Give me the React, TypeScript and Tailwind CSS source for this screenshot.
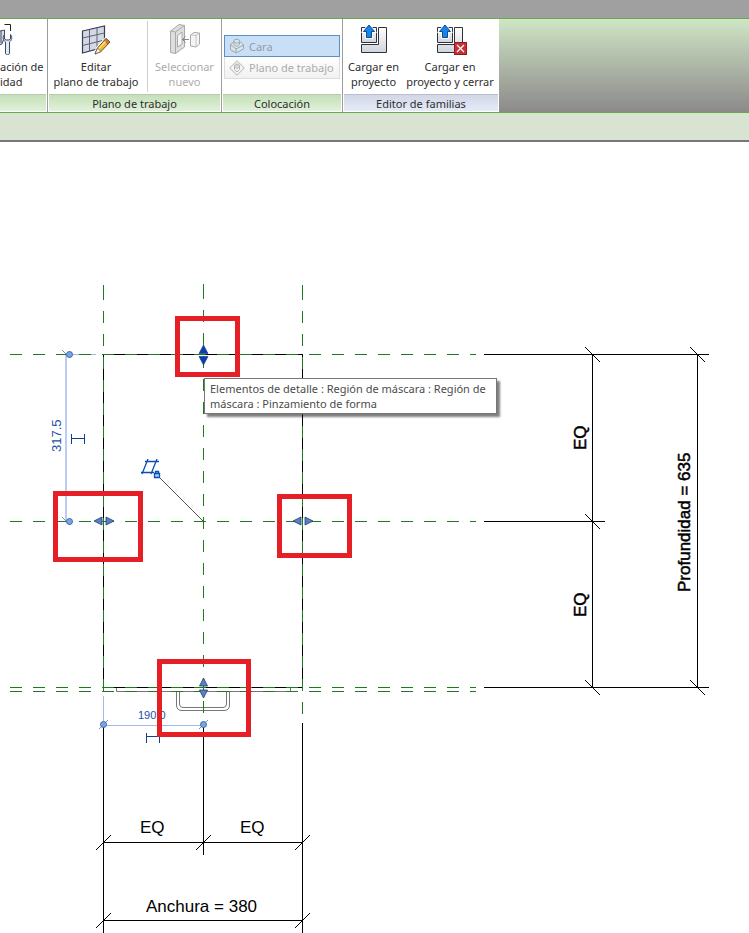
import type { ReactNode } from 'react';

const GREEN = '#1f7a1f';
const NAVY = '#0d3f94';
const DASH = '12 11';

function RibbonPanel({ title, tone = 'green', className, children }: { title: string; tone?: 'green' | 'blue'; className: string; children: ReactNode }) {
  return (
    <section className={`flex shrink-0 flex-col border-r border-[#9c9c9c] bg-white ${className}`}>
      <div className="flex h-[75px]">{children}</div>
      <h2
        className={`mx-px mb-px flex h-[17px] items-center justify-center border-t text-[11px] leading-[15px] text-[#2e2e2e] ${
          tone === 'green' ? 'border-[#b5ccab] bg-linear-to-b from-[#c5dfba] to-[#e0f2d8]' : 'border-[#b9bfd0] bg-linear-to-b from-[#d2d7e6] to-[#e6ebf8]'
        }`}
      >
        {title}
      </h2>
    </section>
  );
}

function LargeButton({ icon, lines, className, disabled }: { icon: ReactNode; lines: [string, string]; className: string; disabled?: boolean }) {
  return (
    <button
      type="button"
      disabled={disabled}
      className={`flex shrink-0 flex-col items-center pt-1 text-[11px] leading-[15px] whitespace-nowrap ${disabled ? 'text-[#acacac]' : 'text-[#2e2e2e]'} ${className}`}
    >
      {icon}
      <span className="mt-1 block">{lines[0]}</span>
      <span className="block">{lines[1]}</span>
    </button>
  );
}

function VisibilityIcon() {
  return (
    <svg width="14" height="32" viewBox="18 0 14 32" fill="none" aria-hidden="true">
      <path d="M22.500 1.500H28.500V8" stroke="#222" />
      <path d="M12 9L18 8L22.500 7V14L20 21L12 24Z" fill="#d5dae4" stroke="#44506a" />
      <path d="M19 8V20" stroke="#44506a" />
      <path d="M22.500 11.500c-2 2-1.500 6 1 7.500v11c0 2.500 4 2.500 4 0v-11c2.500-1.500 3-5.500 1-7.500v4.500l-1.500 1h-3l-1.500-1z" fill="#e4e8ef" stroke="#3c4a66" />
    </svg>
  );
}

function EditPlaneIcon() {
  return (
    <svg width="32" height="32" viewBox="0 0 32 32" fill="none" aria-hidden="true">
      <path d="M2.500 8L24.500 3V24L2.500 30Z" fill="#d4d8e4" />
      <path d="M2.500 8L24.500 3V24L2.500 30Z" stroke="#343d50" strokeWidth="1.200" />
      <path d="M9.500 6.500V28M17 5V26M2.500 15L24.500 10M2.500 22.500L24.500 17" stroke="#5b6478" />
      <path d="M15 31L17.500 25L26 15.500L30 19L21 28.500Z" stroke="#fff" strokeWidth="3" />
      <path d="M15 31L17.500 25L26 15.500L30 19L21 28.500Z" fill="#f2b632" stroke="#6e5322" />
      <path d="M15 31L17.500 25L21 28.500Z" fill="#fff2d8" stroke="#555" strokeWidth=".7" />
      <path d="M24 17.500L26 15.500L30 19L28 21Z" fill="#c97d5c" stroke="#6e5322" strokeWidth=".7" />
      <path d="M19 25.500L25.500 18.500" stroke="#ffe27c" strokeWidth="1.500" />
    </svg>
  );
}

function PickNewIcon() {
  return (
    <svg width="32" height="32" viewBox="0 0 32 32" fill="none" stroke="#a9a9a9" aria-hidden="true">
      <path d="M1.500 8L10 1.500L15.500 2.500V24L6.500 30.500L1.500 29.500Z" fill="#dedede" />
      <path d="M6.500 9L15.500 2.500M6.500 9V30.500M1.500 8L6.500 9" />
      <path d="M8.500 12.500L13 9V21L8.500 24Z" fill="#f8f8f8" />
      <path d="M13 16.500H20M16.500 13.500L13.500 16.500L16.500 19.500" stroke="#888" />
      <path d="M21.500 12L25 9.500L30.500 10V21L27 24L21.500 23Z" fill="#f5f5f5" />
      <path d="M21.500 12L27 12.500L30.500 10M27 12.500V24" stroke="#c4c4c4" />
    </svg>
  );
}

function LoadIcon({ close = false }: { close?: boolean }) {
  return (
    <svg width="32" height="32" viewBox="0 0 32 32" fill="none" className="overflow-visible" aria-hidden="true">
      <defs>
        <linearGradient id="block" x1="0" y1="0" x2="0" y2="1">
          <stop offset="0" stopColor="#fff" />
          <stop offset="1" stopColor="#cfd3dc" />
        </linearGradient>
      </defs>
      <g fill="url(#block)" stroke="#30323a">
        <path d="M3.500 4.500H18.500V19.500H3.500Z" />
        {close ? <path d="M20.500 4.500H28.500V19.500H20.500ZM3.500 21.500H20.500V29.500H3.500Z" /> : <path d="M20.500 4.500H28.500V29.500H3.500V21.500H20.500Z" />}
      </g>
      <path d="M11 2L16.500 8.500H13.500V14.500H8.500V8.500H5.500Z" stroke="#fff" strokeWidth="2.500" />
      <path d="M11 2L16.500 8.500H13.500V14.500H8.500V8.500H5.500Z" fill="#1684ea" stroke="#12488c" />
      {close && (
        <g>
          <rect x="20.500" y="19.500" width="12" height="12" fill="#c83038" stroke="#8f1c22" />
          <path d="M23 22L30 29M30 22L23 29" stroke="#fff" strokeWidth="1.200" />
        </g>
      )}
    </svg>
  );
}

function FaceIcon() {
  return (
    <svg width="16" height="16" viewBox="0 0 16 16" fill="#dce5ed" stroke="#99a6b2" aria-hidden="true">
      <path d="M1.500 6.500L4.500 4L11.500 4L14.500 7V11L7 15L1.500 11.500Z" />
      <path d="M1.500 6.500L7 11L14.500 7M7 11V15" fill="none" />
      <path d="M5 3.500V6.500C6 8.500 9.500 8.500 10.500 6.500V3.500Z" />
      <ellipse cx="7.700" cy="3.200" rx="2.800" ry="2" />
    </svg>
  );
}

function WorkPlaneIcon() {
  return (
    <svg width="16" height="16" viewBox="0 0 16 16" fill="#f4f4f4" stroke="#b4b4b4" aria-hidden="true">
      <path d="M.7 8L8 .7L15.300 8L8 15.300Z" />
      <path d="M5.500 5.500C5.500 3.500 10.500 3.500 10.500 5.500V9.500L8 12L5.500 9.500Z" />
      <ellipse cx="8" cy="6.500" rx="1.300" ry="2" />
    </svg>
  );
}

function Ribbon() {
  return (
    <div role="toolbar" aria-label="Modificar" className="flex h-[95px] overflow-hidden border-y border-[#69a84c] bg-linear-to-b from-[#cfe6c5] to-[#8c8a8a]">
      <section className="flex w-12 shrink-0 flex-col border-r border-[#9c9c9c] bg-white">
        <button type="button" className="flex h-[75px] flex-col items-start pt-1 text-[11px] leading-[15px] whitespace-nowrap text-[#2e2e2e]">
          <VisibilityIcon />
          <span className="mt-1 block">ación de</span>
          <span className="block">idad</span>
        </button>
        <div className="mr-px mb-px h-[17px] border-t border-[#b5ccab] bg-linear-to-b from-[#c5dfba] to-[#e0f2d8]" />
      </section>
      <RibbonPanel title="Plano de trabajo" className="w-[174px]">
        <LargeButton className="w-24" icon={<EditPlaneIcon />} lines={['Editar', 'plano de trabajo']} />
        <div className="my-[2px] ml-[3px] w-px bg-[#cfcfcf]" />
        <LargeButton className="w-[73px]" disabled icon={<PickNewIcon />} lines={['Seleccionar', 'nuevo']} />
      </RibbonPanel>
      <RibbonPanel title="Colocación" className="w-[121px]">
        <div className="mt-4 flex min-w-0 grow flex-col px-[2px]">
          <button type="button" disabled className="flex h-[22px] items-center gap-1 border border-[#5b8fc7] bg-[#c9dff5] px-1 text-[11px] leading-[15px] whitespace-nowrap text-[#919ca6]">
            <FaceIcon />
            Cara
          </button>
          <button type="button" disabled className="flex h-[22px] items-center gap-1 border border-t-0 border-[#dcdcdc] bg-linear-to-b from-white to-[#f1f1f1] px-1 text-[11px] leading-[15px] whitespace-nowrap text-[#acacac]">
            <WorkPlaneIcon />
            Plano de trabajo
          </button>
        </div>
      </RibbonPanel>
      <RibbonPanel title="Editor de familias" tone="blue" className="w-[156px] border-r-0">
        <LargeButton className="w-[61px]" icon={<LoadIcon />} lines={['Cargar en', 'proyecto']} />
        <LargeButton className="w-[92px]" icon={<LoadIcon close />} lines={['Cargar en', 'proyecto y cerrar']} />
      </RibbonPanel>
    </div>
  );
}

function Drawing() {
  return (
    <svg role="img" aria-label="Vista de planta" className="block h-[791px] w-full" fill="none" fontFamily='"Liberation Sans", Arial, sans-serif'>
      <g transform="translate(0 -142)">
        <path d="M66 354V521" stroke="#bccbf3" strokeWidth="2" />
        <g stroke="#a3b9ec" shapeRendering="crispEdges">
          <path d="M103.500 696V725M103 725.500H204M60 354.500H96" />
        </g>

        {/* mask region outline, door panel and handle */}
        <path d="M103.500 354.500H302.500V687.500H103.500Z" stroke="#000" shapeRendering="crispEdges" />
        <g stroke="#777">
          <path d="M116.500 688V691.500H290.500V688" />
          <path d="M176.500 691V705Q176.500 710.500 182 710.500H224Q229.500 710.500 229.500 705V691" />
          <path d="M179.500 691V704Q179.500 707.500 183 707.500H223Q226.500 707.500 226.500 704V691" />
        </g>

        {/* reference planes */}
        <g stroke={GREEN} shapeRendering="crispEdges" strokeDasharray={DASH}>
          <path d="M10 354.500H476M10 521.500H476M10 687.500H476M10 691.500H476" />
          <path d="M103.500 288V692M203.500 287V714M302.500 288V715" />
          <path d="M103.500 285V290M203.500 284V289M302.500 285V290" />
        </g>

        {/* dimension and witness lines */}
        <g stroke="#000" shapeRendering="crispEdges">
          <path d="M484 354.500H709M484 521.500H605M484 687.500H709M592.500 354V688M697.500 354V688" />
          <path d="M103.500 726V933M203.500 726V855M302.500 723V933M103 842.500H303M103 920.500H303" />
          <path d="M585 347L600 362M690 347L705 362M585 514L600 529M585 680L600 695M690 680L705 695" />
          <path d="M96 850L111 835M196 850L211 835M295 850L310 835M96 928L111 913M295 928L310 913" />
        </g>
        <g fill="#000" fontSize="17">
          <text x="140" y="833">EQ</text>
          <text x="240" y="833">EQ</text>
          <text x="146" y="912">Anchura = 380</text>
          <g stroke="#000" strokeWidth=".5">
            <text transform="translate(586 450) rotate(-90)">EQ</text>
            <text transform="translate(586 617) rotate(-90)">EQ</text>
            <text transform="translate(690 592) rotate(-90)">Profundidad = 635</text>
          </g>
        </g>

        {/* temporary dimensions */}
        <g fill="#1c4fa8">
          <text fontSize="13" transform="translate(61 452) rotate(-90)">317.5</text>
          <text fontSize="11" x="138" y="719">190.0</text>
        </g>
        <g stroke={NAVY} shapeRendering="crispEdges">
          <path d="M71.500 434V444M84.500 434V444M72 438.500H85M146.500 733V743M159.500 733V743M147 736.500H160" />
        </g>
        <g stroke="#6f96d6">
          <path d="M62 350L70 358M62 517L70 525M99 729L108 720M199 729L208 720" />
          <g fill="#76a5e8" stroke="#46679c">
            <circle cx="69.500" cy="354.500" r="3" />
            <circle cx="69.500" cy="521.500" r="3" />
            <circle cx="103.500" cy="724.500" r="3" />
            <circle cx="203.500" cy="724.500" r="3" />
          </g>
        </g>

        {/* work plane marker */}
        <path d="M160 478L203.500 521.500" stroke="#5b5555" />
        <g stroke="#0d4fb0" strokeWidth="1.300">
          <path d="M145 461.500H159M141 472.500H154M148 459L142 474M157 459L151 474" />
          <path d="M154.500 473.500H159.500V477.500H154.500ZM155.500 473V471.500H158.500V473" fill="#9cd0ff" />
        </g>

        {/* shape handles */}
        <path d="M203.500 345L208 353.500H199ZM203.500 365L208 356.500H199Z" fill="#0b3fae" stroke="#12347c" strokeWidth=".6" />
        <g fill="#5581cb" stroke="#263a66" strokeWidth=".8">
          <path d="M203.500 678L207.500 686H199.500ZM203.500 698L207.500 690H199.500Z" />
          <path d="M94 521L102 517V525ZM114 521L106 517V525Z" />
          <path d="M293 521L301 517V525ZM313 521L305 517V525Z" />
        </g>

        <g stroke="#e61e26" strokeWidth="5">
          <path d="M177.500 318.500H237.500V374.500H177.500Z" />
          <path d="M55.500 493.500H140.500V559.500H55.500Z" />
          <path d="M279.500 496.500H349.500V555.500H279.500Z" />
          <path d="M159.500 661.500H248.500V734.500H159.500Z" />
        </g>
      </g>
    </svg>
  );
}

export default function App() {
  return (
    <div className="w-full overflow-hidden bg-white font-['Noto_Sans','Open_Sans',sans-serif]">
      <header>
        <div className="h-[18px] bg-[#a0a0a0]" />
        <Ribbon />
        <div className="h-[29px] border-b-2 border-[#777] bg-[#d9e3d2]" />
      </header>
      <main className="relative">
        <Drawing />
        <div role="tooltip" className="absolute top-[236px] left-[204px] w-[293px] border border-[#767676] bg-white px-[5px] py-[2px] text-[11px] leading-[15px] whitespace-nowrap text-[#4c4c4c] shadow-[3px_3px_2px_rgba(0,0,0,0.5)]">
          <p>Elementos de detalle : Región de máscara : Región de</p>
          <p>máscara : Pinzamiento de forma</p>
        </div>
      </main>
    </div>
  );
}
